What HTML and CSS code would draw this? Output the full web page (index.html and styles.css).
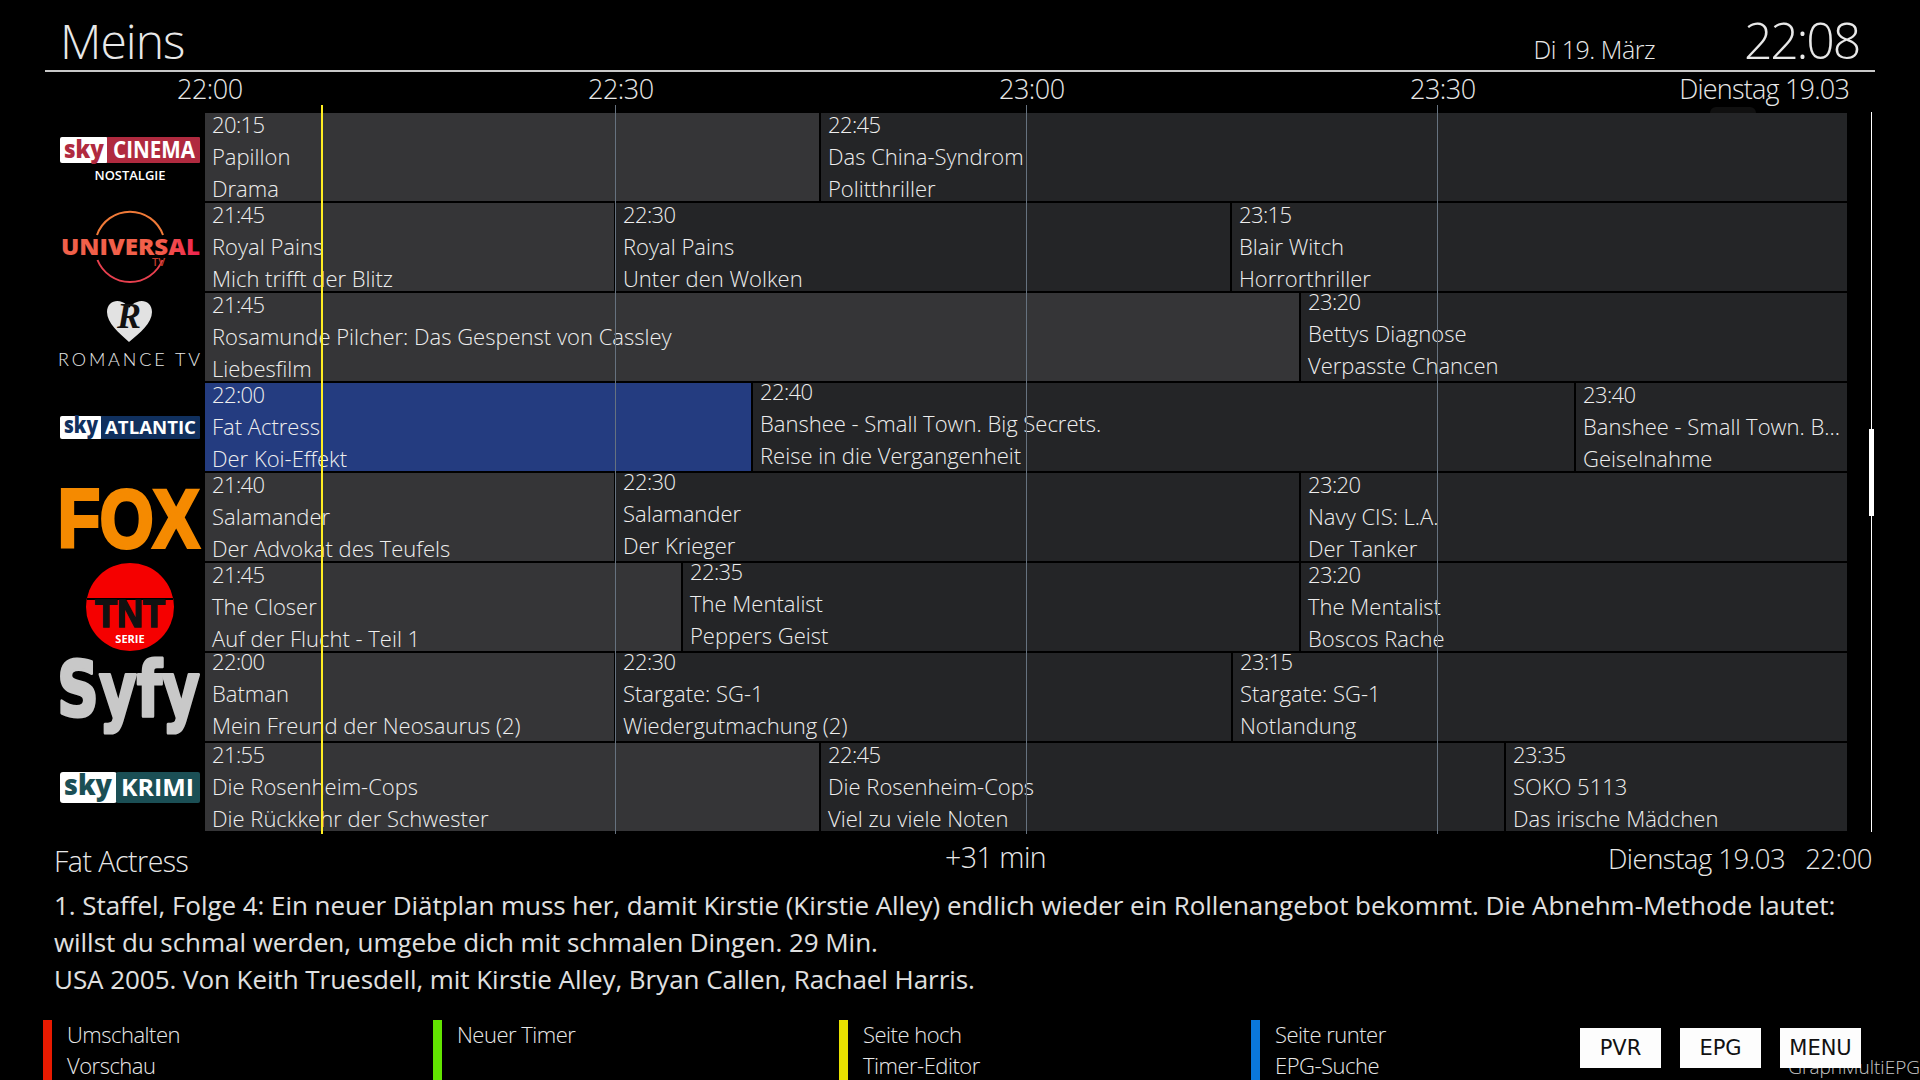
FILE: index.html
```html
<!DOCTYPE html>
<html lang="de">
<head>
  <meta charset="UTF-8" />
  <title>GraphMultiEPG</title>
  <link rel="stylesheet" href="styles.css">
</head>
<body>
  <div class="screen">

    <div class="top">
      <div class="title">Meins</div>
      <div class="today">Di 19. März</div>
      <div class="clock">22:08</div>
    </div>

    <div class="timeline">
      <div class="tick">22:00</div>
      <div class="tick">22:30</div>
      <div class="tick">23:00</div>
      <div class="tick">23:30</div>
      <div class="day">Dienstag 19.03</div>
    </div>

    <div class="epg">
      <div class="ghost"></div>
      <div class="row">
        <div class="logo">
          <svg viewBox="0 0 160 88" width="160" height="88">
            <rect x="15" y="24" width="48" height="26" rx="2" fill="#fff"/>
            <rect x="62" y="24" width="93" height="26" rx="1" fill="#b02a3f"/>
            <text x="19" y="45" class="lg-sky" fill="#b02a3f" font-size="25" textLength="40" lengthAdjust="spacingAndGlyphs">sky</text>
            <text x="68" y="45" class="lg-bold" fill="#fff" font-size="23" textLength="82" lengthAdjust="spacingAndGlyphs">CINEMA</text>
            <text x="85" y="67" class="lg-mid" fill="#fff" font-size="13" text-anchor="middle" textLength="71" lengthAdjust="spacingAndGlyphs">NOSTALGIE</text>
          </svg>
        </div>
        <div class="event now" style="width:614px"><span>20:15</span><span>Papillon</span><span>Drama</span></div>
        <div class="event" style="width:1026px"><span>22:45</span><span>Das China-Syndrom</span><span>Politthriller</span></div>
      </div>
      <div class="row">
        <div class="logo">
          <svg viewBox="0 0 160 88" width="160" height="88">
            <defs>
              <linearGradient id="univ" x1="0" x2="1" y1="0" y2="0">
                <stop offset="0" stop-color="#f0604a"/>
                <stop offset="0.7" stop-color="#f2604a"/>
                <stop offset="1" stop-color="#ee2150"/>
              </linearGradient>
            </defs>
            <path d="M52 32 A35 35 0 0 1 118 32" fill="none" stroke="#f07a38" stroke-width="2"/>
            <path d="M117.5 57 A35 35 0 0 1 52.5 57" fill="none" stroke="#e8404f" stroke-width="2"/>
            <text x="16" y="52" class="lg-sky" fill="url(#univ)" font-size="22" textLength="139" lengthAdjust="spacingAndGlyphs">UNIVERSAL</text>
            <text x="107" y="63" class="lg-mid" fill="#c0392b" font-size="11">TV</text>
          </svg>
        </div>
        <div class="event now" style="width:409px"><span>21:45</span><span>Royal Pains</span><span>Mich trifft der Blitz</span></div>
        <div class="event" style="width:614px"><span>22:30</span><span>Royal Pains</span><span>Unter den Wolken</span></div>
        <div class="event"><span>23:15</span><span>Blair Witch</span><span>Horrorthriller</span></div>
      </div>
      <div class="row">
        <div class="logo">
          <svg viewBox="0 0 160 88" width="160" height="88">
            <path d="M84 49 C74 40 62 30 62 19 C62 9 71 6 77 9 C80 10 83 13 84 15 C86 13 88 10 92 9 C98 6 107 9 107 19 C107 30 95 40 84 49 Z" fill="#e2e2e2"/>
            <text x="84" y="35" class="lg-serif" fill="#111" font-size="36" text-anchor="middle">R</text>
            <text x="13" y="73" class="lg-thin" fill="#e8e8e8" font-size="18" textLength="142">ROMANCE TV</text>
          </svg>
        </div>
        <div class="event now" style="width:1094px"><span>21:45</span><span>Rosamunde Pilcher: Das Gespenst von Cassley</span><span>Liebesfilm</span></div>
        <div class="event up"><span>23:20</span><span>Bettys Diagnose</span><span>Verpasste Chancen</span></div>
      </div>
      <div class="row">
        <div class="logo">
          <svg viewBox="0 0 160 88" width="160" height="88">
            <rect x="15" y="33" width="42" height="23" rx="2" fill="#fff"/>
            <rect x="56" y="33" width="99" height="23" rx="1" fill="#10305e"/>
            <text x="19" y="50" class="lg-sky" fill="#10305e" font-size="23" textLength="34" lengthAdjust="spacingAndGlyphs">sky</text>
            <text x="60" y="51" class="lg-bold" fill="#fff" font-size="18" textLength="91" lengthAdjust="spacingAndGlyphs">ATLANTIC</text>
          </svg>
        </div>
        <div class="event selected" style="width:546px"><span>22:00</span><span>Fat Actress</span><span>Der Koi-Effekt</span></div>
        <div class="event up" style="width:821px"><span>22:40</span><span>Banshee - Small Town. Big Secrets.</span><span>Reise in die Vergangenheit</span></div>
        <div class="event"><span>23:40</span><span>Banshee - Small Town. B...</span><span>Geiselnahme</span></div>
      </div>
      <div class="row">
        <div class="logo">
          <svg viewBox="0 0 160 88" width="160" height="88">
            <text x="13" y="74" class="lg-black" fill="#f58a00" stroke="#f58a00" stroke-width="4" font-size="81" textLength="141" lengthAdjust="spacingAndGlyphs">FOX</text>
          </svg>
        </div>
        <div class="event now" style="width:409px"><span>21:40</span><span>Salamander</span><span>Der Advokat des Teufels</span></div>
        <div class="event up" style="width:683px"><span>22:30</span><span>Salamander</span><span>Der Krieger</span></div>
        <div class="event"><span>23:20</span><span>Navy CIS: L.A.</span><span>Der Tanker</span></div>
      </div>
      <div class="row">
        <div class="logo">
          <svg viewBox="0 0 160 88" width="160" height="88">
            <ellipse cx="85" cy="44" rx="44" ry="44" fill="#f50000"/>
            <rect x="42" y="35" width="86" height="2" fill="#000"/>
            <text x="85" y="64" class="lg-black" fill="#111" stroke="#111" stroke-width="1.5" font-size="38" text-anchor="middle" textLength="70" lengthAdjust="spacingAndGlyphs">TNT</text>
            <text x="85" y="80" class="lg-bold" fill="#fff" font-size="11" text-anchor="middle">SERIE</text>
          </svg>
        </div>
        <div class="event now" style="width:476px"><span>21:45</span><span>The Closer</span><span>Auf der Flucht - Teil 1</span></div>
        <div class="event up" style="width:616px"><span>22:35</span><span>The Mentalist</span><span>Peppers Geist</span></div>
        <div class="event"><span>23:20</span><span>The Mentalist</span><span>Boscos Rache</span></div>
      </div>
      <div class="row">
        <div class="logo">
          <svg viewBox="0 0 160 88" width="160" height="88">
            <text x="12" y="63" class="lg-round" fill="#c8c8c8" stroke="#c8c8c8" stroke-width="3" stroke-linejoin="round" font-size="76" textLength="143" lengthAdjust="spacingAndGlyphs">Syfy</text>
          </svg>
        </div>
        <div class="event now up" style="width:409px"><span>22:00</span><span>Batman</span><span>Mein Freund der Neosaurus (2)</span></div>
        <div class="event up" style="width:615px"><span>22:30</span><span>Stargate: SG-1</span><span>Wiedergutmachung (2)</span></div>
        <div class="event up"><span>23:15</span><span>Stargate: SG-1</span><span>Notlandung</span></div>
      </div>
      <div class="row">
        <div class="logo">
          <svg viewBox="0 0 160 88" width="160" height="88">
            <rect x="15" y="29" width="57" height="31" rx="3" fill="#fff"/>
            <rect x="71" y="29" width="84" height="31" rx="2" fill="#1b4f55"/>
            <text x="19" y="52" class="lg-sky" fill="#1b4f55" font-size="29" textLength="48" lengthAdjust="spacingAndGlyphs">sky</text>
            <text x="76" y="53" class="lg-bold" fill="#fff" font-size="24" textLength="73" lengthAdjust="spacingAndGlyphs">KRIMI</text>
          </svg>
        </div>
        <div class="event now" style="width:614px"><span>21:55</span><span>Die Rosenheim-Cops</span><span>Die Rückkehr der Schwester</span></div>
        <div class="event" style="width:683px"><span>22:45</span><span>Die Rosenheim-Cops</span><span>Viel zu viele Noten</span></div>
        <div class="event"><span>23:35</span><span>SOKO 5113</span><span>Das irische Mädchen</span></div>
      </div>

      <div class="gridline" style="left:615px"></div>
      <div class="gridline" style="left:1026px"></div>
      <div class="gridline" style="left:1437px"></div>
      <div class="nowline"></div>
      <div class="scrollbar"><div class="thumb"></div></div>
    </div>

    <div class="info">
      <div class="info-title">Fat Actress</div>
      <div class="info-left">+31 min</div>
      <div class="info-date">Dienstag 19.03&nbsp;&nbsp;&nbsp;22:00</div>
    </div>
    <div class="desc">
      1. Staffel, Folge 4: Ein neuer Diätplan muss her, damit Kirstie (Kirstie Alley) endlich wieder ein Rollenangebot bekommt. Die Abnehm-Methode lautet:<br>
      willst du schmal werden, umgebe dich mit schmalen Dingen. 29 Min.<br>
      USA 2005. Von Keith Truesdell, mit Kirstie Alley, Bryan Callen, Rachael Harris.
    </div>

    <div class="keys">
      <div class="key red"><span>Umschalten</span><span>Vorschau</span></div>
      <div class="key green"><span>Neuer Timer</span></div>
      <div class="key yellow"><span>Seite hoch</span><span>Timer-Editor</span></div>
      <div class="key blue"><span>Seite runter</span><span>EPG-Suche</span></div>
      <div class="skin-name">GraphMultiEPG</div>
      <div class="buttons">
        <div class="btn">PVR</div>
        <div class="btn">EPG</div>
        <div class="btn">MENU</div>
      </div>
    </div>

  </div>
</body>
</html>
```

FILE: styles.css
```css
* {
  box-sizing: border-box;
}

body {
  margin: 0;
  background: #000;
  color: #e8e8e8;
  font-family: "Open Sans", "Liberation Sans", sans-serif;
  font-weight: 300;
}

.screen {
  position: relative;
  width: 1920px;
  height: 1080px;
  overflow: hidden;
}

/* header */
.top {
  display: flex;
  align-items: baseline;
  height: 72px;
  margin: 0 45px;
  padding: 0 16px 0 15px;
  border-bottom: 2px solid #c8c8c8;
}

.title {
  font-size: 48px;
  line-height: 82px;
  letter-spacing: -1px;
  flex: 1;
}

.today {
  font-size: 25px;
  letter-spacing: -0.5px;
  margin-right: 89px;
}

.clock {
  font-size: 50px;
  letter-spacing: -2.2px;
}

.timeline {
  display: flex;
  align-items: center;
  height: 33px;
  padding-left: 177px;
  font-size: 27px;
  letter-spacing: -0.5px;
}

.tick {
  width: 411px;
}

.day {
  position: absolute;
  right: 71px;
  top: 72px;
  line-height: 33px;
  letter-spacing: -0.8px;
}

/* grid */
.epg {
  position: relative;
  height: 718px;
  margin-top: 8px;
  padding-left: 45px;
}

.row {
  display: flex;
  gap: 2px;
  height: 88px;
  margin-bottom: 2px;
  width: 1802px;
}

.logo {
  width: 160px;
  flex-shrink: 0;
  margin-right: -2px;
}

.logo svg {
  display: block;
  overflow: visible;
}

.event {
  display: flex;
  flex-direction: column;
  gap: 6px;
  flex: none;
  height: 88px;
  padding: 0 3px 0 7px;
  background: #242527;
  font-size: 22px;
  line-height: 26px;
  white-space: nowrap;
  color: #eee;
}

.event:last-of-type {
  flex: 1;
}

.event span:first-child {
  margin-top: -2px;
  letter-spacing: -0.6px;
}

.event.up span:first-child {
  margin-top: -5px;
}

.event.now {
  background: #353537;
}

.event.selected {
  background: #243c80;
}

.gridline,
.nowline {
  position: absolute;
  top: -8px;
  height: 729px;
}

.gridline {
  width: 1px;
  background: #66727f;
}

.nowline {
  left: 321px;
  width: 2px;
  background: #ffee22;
}

.scrollbar {
  position: absolute;
  left: 1871px;
  top: -1px;
  width: 1px;
  height: 720px;
  background: #fff;
}

.thumb {
  position: absolute;
  left: -2px;
  top: 317px;
  width: 5px;
  height: 87px;
  background: #fff;
}

.ghost {
  position: absolute;
  left: 1710px;
  top: -6px;
  width: 46px;
  height: 6px;
  border-radius: 23px 23px 0 0;
  background: #101010;
}

/* info */
.info {
  display: flex;
  align-items: center;
  height: 45px;
  margin-top: 3px;
  padding: 0 48px 0 54px;
  font-size: 28.5px;
  letter-spacing: -0.5px;
}

.info-title {
  width: 891px;
  margin-top: 8px;
}

.info-left {
  flex: 1;
}

.info-date {
  font-size: 27.5px;
  margin-top: 4px;
}

.desc {
  padding-left: 54px;
  margin-top: 8px;
  font-size: 26px;
  line-height: 37px;
  white-space: nowrap;
  font-weight: 400;
  letter-spacing: -0.05px;
  color: #e0e0e0;
}

/* bottom keys */
.keys {
  position: absolute;
  left: 43px;
  right: 0;
  top: 1020px;
  height: 60px;
  display: flex;
}

.key {
  display: flex;
  flex-direction: column;
  width: 390px;
  height: 60px;
  padding-left: 15px;
  border-left: 9px solid;
  font-size: 22px;
  line-height: 31px;
  letter-spacing: -0.5px;
}

.key span:first-child {
  margin-top: -1px;
}

.red { border-color: #e81a00; }
.green { border-color: #62e400; width: 406px; }
.yellow { border-color: #e8e000; width: 412px; }
.blue { border-color: #0a78dc; }

.skin-name {
  position: absolute;
  right: 0;
  top: 34px;
  font-size: 19px;
  color: #c8c8c8;
}

.buttons {
  position: absolute;
  left: 1537px;
  top: 8px;
  display: flex;
  gap: 19px;
}

.btn {
  width: 81px;
  height: 40px;
  background: #fdfdfd;
  color: #111;
  font-family: "DejaVu Sans", sans-serif;
  font-weight: 400;
  font-size: 21px;
  line-height: 41px;
  text-align: center;
}

/* channel logos */
.lg-sky {
  font-family: "Open Sans", sans-serif;
  font-weight: 800;
}

.lg-bold {
  font-family: "Open Sans", sans-serif;
  font-weight: 700;
}

.lg-mid {
  font-family: "Open Sans", sans-serif;
  font-weight: 600;
}

.lg-thin {
  font-family: "Lato", sans-serif;
  font-weight: 300;
}

.lg-serif {
  font-family: "Liberation Serif", serif;
  font-style: italic;
  font-weight: 700;
}

.lg-black {
  font-family: "Liberation Sans", sans-serif;
  font-weight: 700;
}

.lg-round {
  font-family: "DejaVu Sans", sans-serif;
  font-weight: 700;
}
```
